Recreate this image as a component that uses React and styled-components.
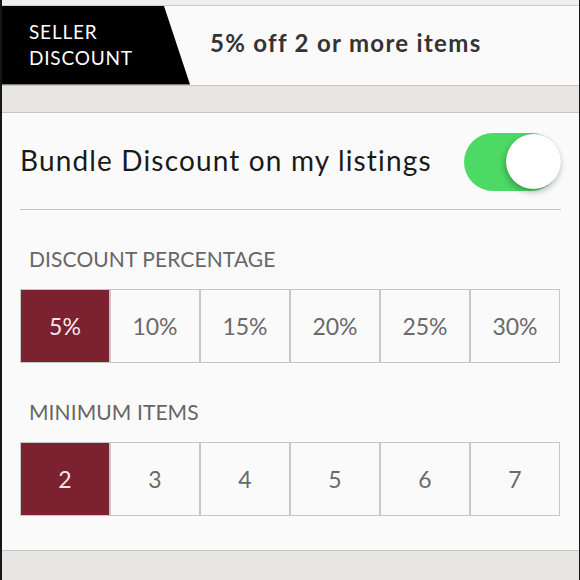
import React, { useState } from "react";
import styled, { createGlobalStyle } from "styled-components";

const GlobalStyle = createGlobalStyle`
  html, body { margin: 0; padding: 0; background: #e8e6e2; }
  * { box-sizing: border-box; }
  body { font-family: "Lato", "Liberation Sans", sans-serif; }
`;

const Page = styled.div`
  width: 580px;
  height: 580px;
  overflow: hidden;
  border-left: 2px solid #161616;
  border-right: 1px solid #161616;
  background: #e8e6e2;
  display: flex;
  flex-direction: column;
`;

const TopStrip = styled.div`
  height: 6px;
  background: #efeeeb;
  border-bottom: 1px solid #cdcccb;
`;

const Header = styled.div`
  height: 79px;
  background: #fbfafa;
  display: flex;
  align-items: center;
  margin-left: -2px;
`;

const Tag = styled.div`
  width: 190px;
  height: 100%;
  background: #000;
  clip-path: polygon(0 0, 164px 0, 190px 100%, 0 100%);
  color: #fff;
  font-size: 19px;
  line-height: 26px;
  padding-left: 29px;
  display: flex;
  flex-direction: column;
  justify-content: center;
  letter-spacing: 0.8px;
`;

const HeaderText = styled.div`
  margin-left: 20px;
  margin-top: -5px;
  font-size: 24px;
  font-weight: 700;
  color: #333;
  letter-spacing: 1.3px;
`;

const Band = styled.div`
  height: ${(p) => p.h}px;
  background: #e8e6e2;
  border-top: 1px solid #c6c5c3;
  ${(p) => (p.bottom ? "border-bottom: 1px solid #c6c5c3;" : "")}
`;

const Panel = styled.div`
  background: #fbfafa;
  padding: 0 18px;
  height: 439px;
  display: flex;
  flex-direction: column;
`;

const ToggleRow = styled.div`
  height: 97px;
  display: flex;
  align-items: center;
  justify-content: space-between;
  border-bottom: 1px solid #c4c3c3;
  padding-right: 1px;
`;

const ToggleLabel = styled.div`
  font-size: 28px;
  color: #1a1a1a;
  letter-spacing: 1.15px;
  margin-top: -2px;
`;

const Switch = styled.button`
  width: 96px;
  height: 58px;
  border-radius: 29px;
  border: none;
  padding: 0;
  background: ${(p) => (p.on ? "#4cd964" : "#e5e5e5")};
  position: relative;
  cursor: pointer;
  margin-top: 1px;
`;

const Knob = styled.span`
  position: absolute;
  top: 1px;
  left: ${(p) => (p.on ? "42px" : "1px")};
  width: 55px;
  height: 55px;
  border-radius: 50%;
  background: #fff;
  box-shadow: -1px 3px 6px rgba(0, 0, 0, 0.28), 0 0 1px rgba(0, 0, 0, 0.2);
`;

const Label = styled.div`
  font-size: 21px;
  color: #666;
  padding-left: 9px;
  margin-top: ${(p) => p.mt}px;
  height: 24px;
  line-height: 24px;
  letter-spacing: 0.1px;
`;

const Grid = styled.div`
  margin-top: ${(p) => p.mt}px;
  display: grid;
  grid-template-columns: repeat(6, 1fr);
  gap: 2px;
  padding: 1px;
  background: #c8c7c7;
  height: 74px;
  width: 540px;
`;

const Cell = styled.button`
  border: none;
  padding: 0;
  background: ${(p) => (p.selected ? "#7c2130" : "#fbfafa")};
  color: ${(p) => (p.selected ? "#f4e8ea" : "#6a6a6a")};
  font-family: inherit;
  font-size: 23px;
  cursor: pointer;
  display: flex;
  align-items: center;
  justify-content: center;
`;

const percents = ["5%", "10%", "15%", "20%", "25%", "30%"];
const items = ["2", "3", "4", "5", "6", "7"];

export default function App() {
  const [on, setOn] = useState(true);
  const [pct, setPct] = useState(0);
  const [min, setMin] = useState(0);
  return (
    <>
      <GlobalStyle />
      <Page>
        <TopStrip />
        <Header>
          <Tag>
            <span>SELLER</span>
            <span>DISCOUNT</span>
          </Tag>
          <HeaderText>
            {percents[pct]} off {items[min]} or more items
          </HeaderText>
        </Header>
        <Band h={29} bottom />
        <Panel>
          <ToggleRow>
            <ToggleLabel>Bundle Discount on my listings</ToggleLabel>
            <Switch on={on ? 1 : 0} onClick={() => setOn(!on)}>
              <Knob on={on ? 1 : 0} />
            </Switch>
          </ToggleRow>
          <Label mt={37}>DISCOUNT PERCENTAGE</Label>
          <Grid mt={18}>
            {percents.map((p, i) => (
              <Cell key={p} selected={i === pct} onClick={() => setPct(i)}>
                {p}
              </Cell>
            ))}
          </Grid>
          <Label mt={37}>MINIMUM ITEMS</Label>
          <Grid mt={18}>
            {items.map((p, i) => (
              <Cell key={p} selected={i === min} onClick={() => setMin(i)}>
                {p}
              </Cell>
            ))}
          </Grid>
        </Panel>
        <Band h={30} />
      </Page>
    </>
  );
}
